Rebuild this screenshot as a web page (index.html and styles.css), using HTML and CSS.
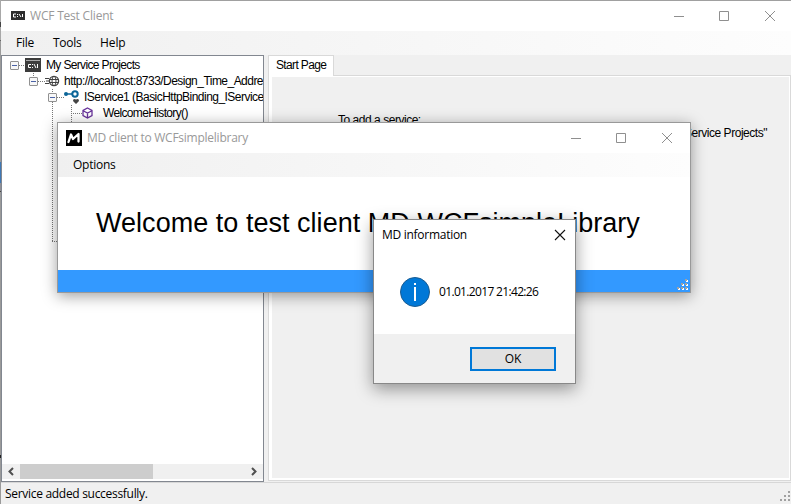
FILE: index.html
```
<!DOCTYPE html>
<html lang="en">
<head>
<meta charset="utf-8">
<title>WCF Test Client</title>
<link rel="stylesheet" href="styles.css">
</head>
<body>
<div class="desktop">
<section class="window main">
  <header class="titlebar">
    <svg class="app-icon" width="14" height="10" viewBox="0 0 14 10"><rect width="14" height="9" fill="#2d2d2d"/><path d="M5 3H2.500V6H5M6.500 3v1M6.500 5v1M8 3l2 3M11.500 3v3" stroke="#fff" fill="none"/></svg>
    <h1 class="t-main">WCF Test Client</h1>
    <svg class="controls" width="103" height="12" viewBox="0 0 103 12" fill="none" stroke="#8f8f8f"><path d="M0 6.500H10M45.500 1.500h9v9h-9zM91 1l10 10M101 1L91 11"/></svg>
  </header>
  <nav class="menu"><span class="m-file">File</span><span class="m-tools">Tools</span><span class="m-help">Help</span></nav>
  <div class="workspace">
    <aside class="tree">
      <svg class="lines" width="80" height="200" viewBox="2 56 80 200" fill="none" stroke="#777" stroke-dasharray="1 1"><path d="M19 65.500H26M33.500 73V77M38 81.500H45M52.500 89V92M57 97.500H64M52.500 102V241M52 241.500H60M71.500 105V124M71 113.500H82"/></svg>
      <div class="row r1"><i class="box"></i><svg width="16" height="14" viewBox="0 0 16 14"><rect width="16" height="14" fill="#3c3c3c"/><path d="M1 2.500H15" stroke="#aaa"/><path d="M6 6.500H3.500v3H6M7.500 6v1M7.500 9v1M9 6l2 4M12.500 6v4" fill="none" stroke="#fff"/></svg><span class="wide">My Service Projects</span></div>
      <div class="row r2"><i class="box"></i><svg width="15" height="12" viewBox="0 0 15 12" fill="none" stroke="#424242"><circle cx="9" cy="6" r="4.600" stroke-width="1.300"/><ellipse cx="9" cy="6" rx="2" ry="4.600"/><path d="M4.500 4.500h9M4.500 7.500h9M0 3.500h4M1 6h3M0 8.500h4"/></svg><span>http://localhost:8733/Design_Time_Addre</span></div>
      <div class="row r3"><i class="box"></i><svg width="15" height="15" viewBox="0 0 15 15"><circle cx="2" cy="4" r="2" fill="#0b6598"/><path d="M2 4h7" stroke="#0b6598" stroke-width="1.500"/><circle cx="11" cy="4" r="2.700" fill="#fff" stroke="#0b6598" stroke-width="2"/><path d="M12 14L9 11q0-3 3-1.500Q15 8 15 11z" fill="#444"/></svg><span>IService1 (BasicHttpBinding_IService</span></div>
      <div class="row r4"><svg width="11" height="12" viewBox="0 0 11 12" fill="none" stroke="#68339a" stroke-width="1.300"><path d="M5.500 1L10 3.500v5L5.500 11 1 8.500v-5zM1.500 4L5.500 6 9.500 4M5.500 6v5"/></svg><span class="wide">WelcomeHistory()</span></div>
      <div class="row r5"><svg width="12" height="14"><circle cx="6" cy="6" r="5.500" fill="#d11a2a"/></svg></div>
      <div class="scroll"><svg width="18" height="15" fill="none" stroke="#505050" stroke-width="2"><path d="M11 4L7.500 7.500 11 11"/></svg><i class="thumb"></i><svg class="right" width="18" height="15" fill="none" stroke="#505050" stroke-width="2"><path d="M7 4l3.500 3.500L7 11"/></svg></div>
    </aside>
    <main class="tabs">
      <div class="tab"><span class="wide">Start Page</span></div>
      <div class="page"><div class="page-in"><p class="add"><span>To add a service:</span></p><p class="step"><span>1. Select "Add Service" from the File menu or the context menu of "My Service Projects"</span></p></div></div>
    </main>
  </div>
  <footer class="status"><span>Service added successfully.</span><svg width="12" height="12" fill="#a0a0a0"><path d="M8 0h2v2H8zM4 4h2v2H4zM8 4h2v2H8zM0 8h2v2H0zM4 8h2v2H4zM8 8h2v2H8z"/></svg></footer>
</section>
<section class="window client">
  <header class="titlebar">
    <svg class="md-icon" width="16" height="16" viewBox="0 0 16 16"><rect width="16" height="16"/><path d="M2.500 12L5 4.500 7 9 12.500 4 12.500 11.500" fill="none" stroke="#fff" stroke-width="2.300" stroke-linejoin="round" stroke-linecap="round"/></svg>
    <h2 class="t-client">MD client to WCFsimplelibrary</h2>
    <svg class="controls" width="103" height="12" viewBox="0 0 103 12" fill="none" stroke="#8f8f8f"><path d="M0 6.500H10M45.500 1.500h9v9h-9zM91 1l10 10M101 1L91 11"/></svg>
  </header>
  <nav class="menu"><span class="m-options">Options</span></nav>
  <div class="welcome"><span>Welcome to test client MD WCFsimpleLibrary</span></div>
  <footer class="bluebar"><svg width="12" height="12"><path fill="#fff" d="M9 1h2v2H9zM5 5h2v2H5zM9 5h2v2H9zM1 9h2v2H1zM5 9h2v2H5zM9 9h2v2H9z"/><path fill="#a0a0a0" d="M8 0h2v2H8zM4 4h2v2H4zM8 4h2v2H8zM0 8h2v2H0zM4 8h2v2H4zM8 8h2v2H8z"/></svg></footer>
</section>
<section class="window dialog">
  <header class="dtitle"><h2 class="t-dialog">MD information</h2><svg width="12" height="12" stroke="#111" stroke-width="1.100"><path d="M1 1l10 10M11 1L1 11"/></svg></header>
  <div class="message"><svg width="30" height="30" viewBox="0 0 30 30"><circle cx="15" cy="15" r="14.500" fill="#0078d7" stroke="#1b5c91"/><path d="M15 10v14" stroke="#fff" stroke-width="2"/><path d="M14 6h2v2h-2z" fill="#fff"/></svg><span class="date">01.01.2017 21:42:26</span></div>
  <footer class="actions"><button><span>OK</span></button></footer>
</section>
</div>
</body>
</html>
```
FILE: styles.css
```
* { box-sizing: border-box; }
body { margin: 0; font: 12px/16px "Open Sans", sans-serif; color: #000; }
h1, h2, p { margin: 0; font-size: 12px; font-weight: 400; }
svg { display: block; flex: none; }
span, h1, h2 { white-space: nowrap; }
.desktop { position: relative; width: 791px; height: 504px; overflow: hidden; background: #8f8f92; }
.desktop::after { content: ""; position: absolute; left: 0; top: 0; width: 1px; height: 504px; background: linear-gradient(#a8a8a8 22px, #444 22px 27px, #a8a8a8 27px 40px, #666 40px 41px, #9a9a9a 41px 162px, #3f78b5 162px 183px, #8f8f96 183px 191px, #444 191px 192px, #9a9a9a 192px 455px, #222 455px 458px, #9a9a9a 458px); }
.window { position: absolute; display: flex; flex-direction: column; background: #fff; }
.main { left: 0; top: 0; width: 791px; height: 504px; border-top: 1px solid #a0a0a0; border-left: 1px solid #a0a0a0; background: #f0f0f0; }
.client { left: 57px; top: 122px; width: 634px; height: 171px; border: 1px solid #999; box-shadow: 0 3px 14px rgba(0,0,0,.38); }
.dialog { left: 373px; top: 219px; width: 203px; height: 165px; border: 1px solid #888; box-shadow: 0 5px 16px rgba(0,0,0,.4); }
.titlebar { display: flex; align-items: center; height: 30px; flex: none; background: #fff; color: #999; }
.t-main { letter-spacing: -.2px; }
.t-client { letter-spacing: -.25px; }
.t-dialog { letter-spacing: -.28px; }
.app-icon { margin: 0 5px 0 10px; }
.md-icon { margin: 0 5px 0 8px; }
.controls { margin-left: auto; margin-right: 14px; }
.client .controls { margin-right: 16px; }
.menu { display: flex; align-items: center; height: 24px; flex: none; background: linear-gradient(90deg, #f0f0f0, #fdfdfd); letter-spacing: -.25px; }
.m-file { margin-left: 15px; width: 37px; }
.m-tools { width: 47px; }
.m-help { letter-spacing: -.1px; }
.m-options { margin-left: 15px; }
.workspace { display: flex; flex: 1; min-height: 0; }
.tree { position: relative; display: flex; flex-direction: column; width: 263px; border: 1px solid #828790; padding-top: 1px; background: #fff; overflow: hidden; font: 12px/16px "Liberation Sans", sans-serif; letter-spacing: -.53px; }
.tree .wide, .tab .wide { letter-spacing: -.65px; }
.lines { position: absolute; left: 0; top: 0; }
.row { position: relative; display: flex; align-items: center; height: 16px; flex: none; overflow: hidden; }
.box { width: 9px; height: 9px; flex: none; border: 1px solid #919191; border-radius: 1px; background: linear-gradient(#4b63a7, #4b63a7) center / 5px 1px no-repeat, #f7f7f7; }
.r1 { padding-left: 8px; }
.r1 svg { margin: 0 5px 0 6px; }
.r2 { padding-left: 27px; }
.r2 svg { margin: 0 4px 0 7px; }
.r3 { padding-left: 46px; }
.r3 svg { margin: 0 5px 0 7px; }
.r4 { padding-left: 80px; }
.r4 svg { margin-right: 10px; }
.r5 { padding-left: 82px; }
.scroll { display: flex; margin-top: auto; height: 15px; margin-bottom: 2px; background: #f0f0f0; }
.thumb { width: 133px; background: #cdcdcd; }
.right { margin-left: auto; }
.tabs { display: flex; flex-direction: column; flex: 1; margin-left: 4px; padding-bottom: 1px; font: 12px/16px "Liberation Sans", sans-serif; letter-spacing: -.47px; }
.tab { width: 66px; height: 21px; margin-bottom: -1px; padding: 1px 0 0 7px; border: 1px solid #d9d9d9; border-bottom: 0; background: #fff; z-index: 1; }
.page { display: flex; flex: 1; border: 1px solid #d9d9d9; padding: 1px 1px 2px 3px; background: #fff; }
.page-in { flex: 1; background: #f0f0f0; padding-top: 35px; }
.add { margin-left: 66px; height: 13px; }
.step { display: flex; justify-content: flex-end; margin-right: 22px; }
.status { display: flex; height: 22px; flex: none; border-top: 1px solid #d7d7d7; padding: 3px 0 0 4px; letter-spacing: -.3px; }
.status svg { margin: 5px -1px 0 auto; }
.welcome { display: flex; align-items: center; flex: 1; padding: 0 0 2px 38px; font: 27px/32px "Liberation Sans", sans-serif; letter-spacing: .03px; }
.bluebar { display: flex; justify-content: flex-end; align-items: flex-end; height: 22px; flex: none; padding: 0 1px 1px 0; background: #39f; }
.dtitle { display: flex; justify-content: space-between; align-items: center; height: 30px; padding: 0 9px 0 8px; }
.message { display: flex; align-items: center; gap: 9px; height: 84px; padding-left: 26px; }
.date { letter-spacing: -.66px; }
.actions { flex: 1; background: #f0f0f0; padding: 13px 0 0 96px; }
button { display: flex; align-items: center; justify-content: center; width: 86px; height: 24px; padding: 0; border: 2px solid #0078d7; background: #e1e1e1; font: inherit; color: #000; }
```
